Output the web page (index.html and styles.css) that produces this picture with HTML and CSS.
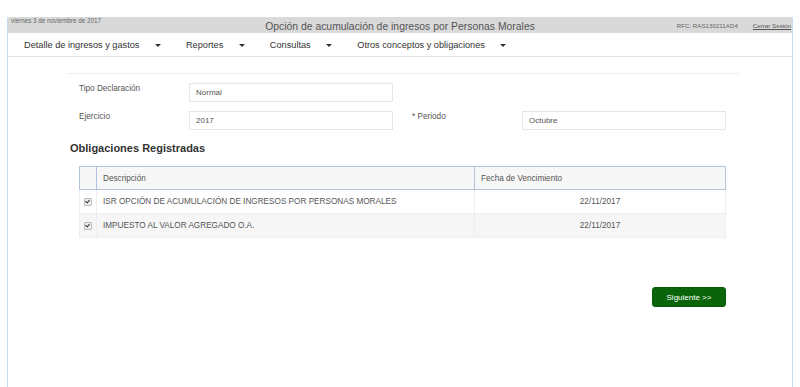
FILE: index.html
```html
<!DOCTYPE html>
<html lang="es">
<head>
  <meta charset="UTF-8">
  <title>Opción de acumulación de ingresos por Personas Morales</title>
  <link rel="stylesheet" href="styles.css">
</head>
<body>
  <div class="page">
    <header class="top">
      <span class="fecha">viernes 3 de noviembre de 2017</span>
      <span class="titulo">Opción de acumulación de ingresos por Personas Morales</span>
      <span class="sesion">
        <span class="rfc">RFC: RAS130211AD4</span>
        <a href="#" class="salir">Cerrar Sesión</a>
      </span>
    </header>

    <nav class="menu">
      <a href="#">Detalle de ingresos y gastos <span class="caret"></span></a>
      <a href="#">Reportes <span class="caret"></span></a>
      <a href="#">Consultas <span class="caret"></span></a>
      <a href="#">Otros conceptos y obligaciones <span class="caret"></span></a>
    </nav>

    <div class="contenido">
      <div class="datos">
        <div class="fila">
          <label class="etiqueta">Tipo Declaración</label>
          <div class="campo">Normal</div>
        </div>
        <div class="fila">
          <label class="etiqueta">Ejercicio</label>
          <div class="campo">2017</div>
          <label class="etiqueta etiqueta-der">* Periodo</label>
          <div class="campo">Octubre</div>
        </div>
      </div>

      <h3>Obligaciones Registradas</h3>

      <table class="obligaciones">
        <thead>
          <tr>
            <th class="col-check"></th>
            <th class="col-desc">Descripción</th>
            <th>Fecha de Vencimiento</th>
          </tr>
        </thead>
        <tbody>
          <tr>
            <td class="col-check"><span class="check"></span></td>
            <td>ISR OPCIÓN DE ACUMULACIÓN DE INGRESOS POR PERSONAS MORALES</td>
            <td class="fecha-v">22/11/2017</td>
          </tr>
          <tr>
            <td class="col-check"><span class="check"></span></td>
            <td>IMPUESTO AL VALOR AGREGADO O.A.</td>
            <td class="fecha-v">22/11/2017</td>
          </tr>
        </tbody>
      </table>

      <div class="acciones">
        <button class="siguiente">Siguiente &gt;&gt;</button>
      </div>
    </div>
  </div>
</body>
</html>
```

FILE: styles.css
```css
html, body {
  margin: 0;
  height: 100%;
}

body {
  font-family: "Liberation Sans", Arial, sans-serif;
  color: #555;
  background: #fff;
  padding-top: 17px;
  box-sizing: border-box;
}

.page {
  margin: 0 7px;
  height: 100%;
  border-left: 1px solid #c9daf2;
  border-right: 1px solid #c9daf2;
}

.top {
  display: grid;
  grid-template-columns: 1fr auto 1fr;
  height: 16px;
  background: #d9d9d9;
  align-items: center;
}

.fecha {
  font-size: 6.3px;
  color: #666;
  align-self: start;
  padding: 0 0 0 3px;
}

.titulo {
  font-size: 10.4px;
  color: #555;
  padding-top: 2px;
}

.sesion {
  display: flex;
  justify-content: flex-end;
  gap: 15px;
  font-size: 6.2px;
  padding-right: 1px;
}

.rfc {
  color: #666;
}

.salir {
  color: #555;
}

.menu {
  display: flex;
  height: 23px;
  align-items: center;
  padding-left: 16px;
  gap: 25px;
  border-bottom: 1px solid #e3e3e3;
}

.menu a {
  font-size: 9.2px;
  color: #333;
  text-decoration: none;
}

.caret {
  display: inline-block;
  margin-left: 13px;
  width: 0;
  height: 0;
  border-left: 3px solid transparent;
  border-right: 3px solid transparent;
  border-top: 3px solid #333;
  vertical-align: middle;
}

.contenido {
  margin: 16px 53px 0 59px;
  border-top: 1px solid #eee;
}

.datos {
  padding: 9px 0 0 12px;
}

.fila {
  display: flex;
  align-items: flex-start;
  margin-bottom: 9px;
}

.fila:last-child {
  margin-bottom: 0;
}

.etiqueta {
  width: 110px;
  font-size: 8.2px;
  color: #555;
  padding-top: 1px;
}

.etiqueta-der {
  margin-left: 19px;
}

.campo {
  width: 204px;
  height: 19px;
  border: 1px solid #e6e6e6;
  box-sizing: border-box;
  padding: 4px 6px;
  font-size: 8px;
  color: #555;
}

.contenido h3 {
  margin: 12px 0 12px 3px;
  font-size: 11px;
  color: #333;
}

.obligaciones {
  margin-left: 12px;
  width: 647px;
  border-collapse: collapse;
  font-size: 8.2px;
  color: #555;
}

.obligaciones th {
  height: 22px;
  background: #f7f7f7;
  border: 1px solid #b3c3db;
  font-weight: normal;
  text-align: left;
  padding: 0 6px;
}

.obligaciones td {
  height: 23px;
  padding: 0 6px;
  border-left: 1px solid #eee;
  border-right: 1px solid #eee;
  border-bottom: 1px solid #eee;
}

.obligaciones tbody tr:nth-child(2) {
  background: #f6f6f6;
}

.obligaciones .col-check {
  width: 16px;
  padding: 0;
  text-align: center;
}

.col-desc {
  width: 365px;
}

.fecha-v {
  text-align: center;
}

.check {
  display: inline-block;
  width: 6px;
  height: 6px;
  border: 1px solid #bbb;
  border-radius: 1px;
  background: #eee;
  position: relative;
  vertical-align: middle;
}

.check::after {
  content: "";
  position: absolute;
  left: 1px;
  top: 0;
  width: 2px;
  height: 3px;
  border-right: 1px solid #333;
  border-bottom: 1px solid #333;
  transform: rotate(40deg);
}

.acciones {
  display: flex;
  justify-content: flex-end;
  margin: 49px 13px 0 0;
}

.siguiente {
  width: 74px;
  height: 20px;
  background: #0a650a;
  color: #fff;
  border: 1px solid #0a5a0a;
  border-radius: 3px;
  font-family: "Liberation Sans", Arial, sans-serif;
  font-size: 8px;
  cursor: pointer;
}
```
